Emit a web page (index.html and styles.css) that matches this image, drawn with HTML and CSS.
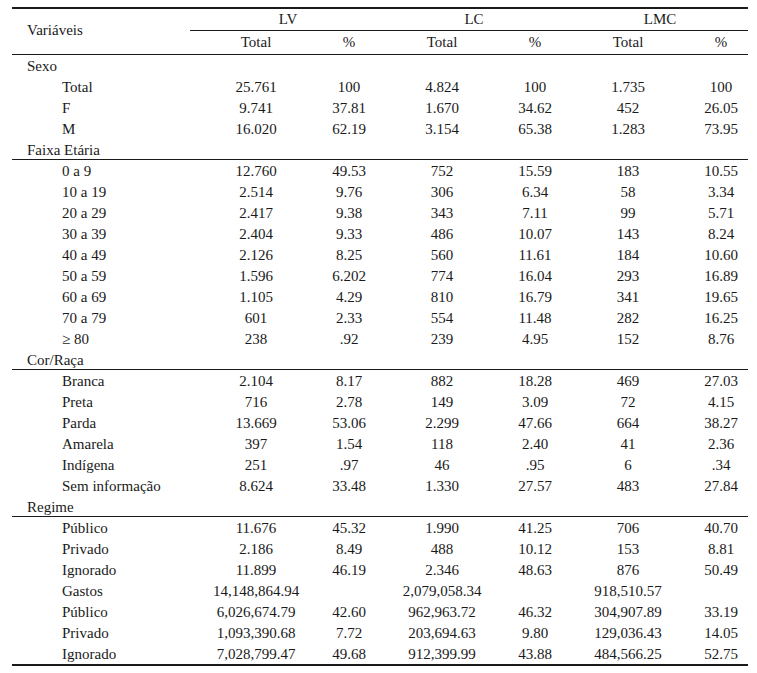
FILE: index.html
```html
<!DOCTYPE html>
<html lang="pt">
<head>
<meta charset="utf-8">
<title>Tabela</title>
<link rel="stylesheet" href="styles.css">
</head>
<body>
<div class="tbl">
  <div class="head">
    <div class="var">Variáveis</div>
    <div class="grp g1">LV</div>
    <div class="grp g2">LC</div>
    <div class="grp g3">LMC</div>
    <div class="sub c2">Total</div><div class="sub c3">%</div>
    <div class="sub c4">Total</div><div class="sub c5">%</div>
    <div class="sub c6">Total</div><div class="sub c7">%</div>
  </div>

  <div class="row cat">Sexo</div>
  <div class="row"><div class="lbl">Total</div><div>25.761</div><div>100</div><div>4.824</div><div>100</div><div>1.735</div><div>100</div></div>
  <div class="row"><div class="lbl">F</div><div>9.741</div><div>37.81</div><div>1.670</div><div>34.62</div><div>452</div><div>26.05</div></div>
  <div class="row"><div class="lbl">M</div><div>16.020</div><div>62.19</div><div>3.154</div><div>65.38</div><div>1.283</div><div>73.95</div></div>

  <div class="row cat ruled">Faixa Etária</div>
  <div class="row"><div class="lbl">0 a 9</div><div>12.760</div><div>49.53</div><div>752</div><div>15.59</div><div>183</div><div>10.55</div></div>
  <div class="row"><div class="lbl">10 a 19</div><div>2.514</div><div>9.76</div><div>306</div><div>6.34</div><div>58</div><div>3.34</div></div>
  <div class="row"><div class="lbl">20 a 29</div><div>2.417</div><div>9.38</div><div>343</div><div>7.11</div><div>99</div><div>5.71</div></div>
  <div class="row"><div class="lbl">30 a 39</div><div>2.404</div><div>9.33</div><div>486</div><div>10.07</div><div>143</div><div>8.24</div></div>
  <div class="row"><div class="lbl">40 a 49</div><div>2.126</div><div>8.25</div><div>560</div><div>11.61</div><div>184</div><div>10.60</div></div>
  <div class="row"><div class="lbl">50 a 59</div><div>1.596</div><div>6.202</div><div>774</div><div>16.04</div><div>293</div><div>16.89</div></div>
  <div class="row"><div class="lbl">60 a 69</div><div>1.105</div><div>4.29</div><div>810</div><div>16.79</div><div>341</div><div>19.65</div></div>
  <div class="row"><div class="lbl">70 a 79</div><div>601</div><div>2.33</div><div>554</div><div>11.48</div><div>282</div><div>16.25</div></div>
  <div class="row"><div class="lbl">≥ 80</div><div>238</div><div>.92</div><div>239</div><div>4.95</div><div>152</div><div>8.76</div></div>

  <div class="row cat ruled">Cor/Raça</div>
  <div class="row"><div class="lbl">Branca</div><div>2.104</div><div>8.17</div><div>882</div><div>18.28</div><div>469</div><div>27.03</div></div>
  <div class="row"><div class="lbl">Preta</div><div>716</div><div>2.78</div><div>149</div><div>3.09</div><div>72</div><div>4.15</div></div>
  <div class="row"><div class="lbl">Parda</div><div>13.669</div><div>53.06</div><div>2.299</div><div>47.66</div><div>664</div><div>38.27</div></div>
  <div class="row"><div class="lbl">Amarela</div><div>397</div><div>1.54</div><div>118</div><div>2.40</div><div>41</div><div>2.36</div></div>
  <div class="row"><div class="lbl">Indígena</div><div>251</div><div>.97</div><div>46</div><div>.95</div><div>6</div><div>.34</div></div>
  <div class="row"><div class="lbl">Sem informação</div><div>8.624</div><div>33.48</div><div>1.330</div><div>27.57</div><div>483</div><div>27.84</div></div>

  <div class="row cat ruled">Regime</div>
  <div class="row"><div class="lbl">Público</div><div>11.676</div><div>45.32</div><div>1.990</div><div>41.25</div><div>706</div><div>40.70</div></div>
  <div class="row"><div class="lbl">Privado</div><div>2.186</div><div>8.49</div><div>488</div><div>10.12</div><div>153</div><div>8.81</div></div>
  <div class="row"><div class="lbl">Ignorado</div><div>11.899</div><div>46.19</div><div>2.346</div><div>48.63</div><div>876</div><div>50.49</div></div>
  <div class="row"><div class="lbl">Gastos</div><div>14,148,864.94</div><div></div><div>2,079,058.34</div><div></div><div>918,510.57</div><div></div></div>
  <div class="row"><div class="lbl">Público</div><div>6,026,674.79</div><div>42.60</div><div>962,963.72</div><div>46.32</div><div>304,907.89</div><div>33.19</div></div>
  <div class="row"><div class="lbl">Privado</div><div>1,093,390.68</div><div>7.72</div><div>203,694.63</div><div>9.80</div><div>129,036.43</div><div>14.05</div></div>
  <div class="row last"><div class="lbl">Ignorado</div><div>7,028,799.47</div><div>49.68</div><div>912,399.99</div><div>43.88</div><div>484,566.25</div><div>52.75</div></div>
</div>
</body>
</html>
```

FILE: styles.css
```css
* { box-sizing: border-box; }

body {
  margin: 0;
  background: #ffffff;
  color: #1a1a1a;
  font-family: "Liberation Serif", "Times New Roman", serif;
  font-size: 15px;
}

.tbl {
  width: 736px;
  margin: 7px 0 0 12px;
  border-bottom: 2px solid #1a1a1a;
}

.head,
.row {
  display: grid;
  grid-template-columns: 178px 132px 54px 132px 54px 132px 54px;
}

.head {
  grid-template-rows: 22px 23px;
  border-top: 2px solid #1a1a1a;
  border-bottom: 1px solid #1a1a1a;
}

.var {
  grid-column: 1;
  grid-row: 1 / 3;
  align-self: center;
  padding-left: 15px;
  padding-bottom: 2px;
}

.grp {
  grid-row: 1;
  text-align: center;
  padding-left: 10px;
  line-height: 21px;
  border-bottom: 1px solid #1a1a1a;
}
.g1 { grid-column: 2 / 4; }
.g2 { grid-column: 4 / 6; }
.g3 { grid-column: 6 / 8; }

.sub {
  grid-row: 2;
  text-align: center;
  line-height: 23px;
}
.c2 { grid-column: 2; }
.c3 { grid-column: 3; }
.c4 { grid-column: 4; }
.c5 { grid-column: 5; }
.c6 { grid-column: 6; }
.c7 { grid-column: 7; }

.row {
  height: 21px;
  padding-top: 1px;
  line-height: 20px;
  text-align: center;
  white-space: nowrap;
}

.row .lbl {
  text-align: left;
  padding-left: 50px;
}

.row.cat {
  display: block;
  text-align: left;
  padding-left: 15px;
}

.row.ruled {
  border-bottom: 1px solid #1a1a1a;
}
```
